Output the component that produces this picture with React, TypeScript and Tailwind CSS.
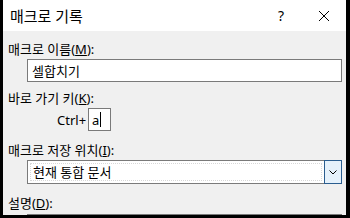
export default function App() {
  const font = { fontFamily: '"Noto Sans", "Noto Sans CJK KR", sans-serif' };
  return (
    <div
      className="w-[350px] h-[218px] overflow-hidden border-l-[3px] border-r-[4px] border-b-[3px] border-black bg-[#f0f0f0] text-black text-[13px] leading-[16px]"
      style={font}
    >
      <div className="h-[31px] bg-white flex items-center pl-[7px] pr-[14px]">
        <span className="text-[15px]">매크로 기록</span>
        <span className="ml-auto mr-[34px] text-[14px]">?</span>
        <svg width="12" height="12" viewBox="0 0 12 12" className="mr-[2px]">
          <path d="M1 1L11 11M11 1L1 11" stroke="#000" strokeWidth="1" />
        </svg>
      </div>

      <div className="flex flex-col pl-[5px] pr-[4px]">
        <div className="mt-[10px]">
          매크로 이름(<span className="underline">M</span>):
        </div>
        <div className="mt-[2px] ml-[19px] h-[23px] border border-[#7a7a7a] bg-white flex items-center pl-[4px]">
          셀합치기
        </div>

        <div className="mt-[8px]">
          바로 가기 키(<span className="underline">K</span>):
        </div>
        <div className="mt-[2px] flex items-center">
          <span className="ml-[49px] mr-[2px]">Ctrl+</span>
          <div className="w-[23px] h-[23px] border border-[#7a7a7a] bg-white flex items-center pl-[3px]">
            <span>a</span>
            <span className="w-px h-[15px] bg-black ml-px" />
          </div>
        </div>

        <div className="mt-[11px]">
          매크로 저장 위치(<span className="underline">I</span>):
        </div>
        <div className="mt-[2px] ml-[19px] h-[24px] border border-[#7a7a7a] bg-white flex items-stretch">
          <div className="flex-1 m-[2px] border border-dotted border-[#d8d8d8] flex items-center pl-[2px]">
            현재 통합 문서
          </div>
          <div className="w-[18px] -my-px -mr-px border border-[#2a5d8f] bg-[#e5f1fb] flex items-center justify-center">
            <svg width="8" height="5" viewBox="0 0 8 5">
              <path d="M0.5 0.5L4 4L7.5 0.5" stroke="#000" strokeWidth="1" fill="none" />
            </svg>
          </div>
        </div>

        <div className="mt-[11px]">
          설명(<span className="underline">D</span>):
        </div>
        <div className="mt-[3px] ml-[19px] h-[40px] border border-[#7a7a7a] bg-white" />
      </div>
    </div>
  );
}
